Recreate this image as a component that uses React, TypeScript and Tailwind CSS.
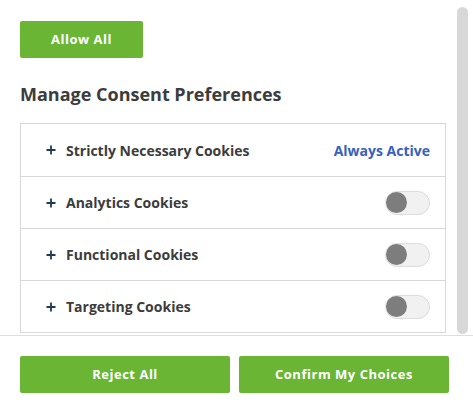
import { useState } from 'react'

const rows = [
  { label: 'Strictly Necessary Cookies', always: true },
  { label: 'Analytics Cookies' },
  { label: 'Functional Cookies' },
  { label: 'Targeting Cookies' },
]

function Toggle() {
  const [on, setOn] = useState(false)
  return (
    <button
      onClick={() => setOn(!on)}
      className="relative w-[45px] h-[24px] rounded-full bg-[#f1f1f1] border border-[#dcdcdc] flex items-center"
    >
      <span className={`w-[21px] h-[21px] rounded-full ${on ? 'bg-[#6ab533] ml-[21px]' : 'bg-[#7d7d7d] ml-[0px]'}`} />
    </button>
  )
}

function Plus() {
  return (
    <svg width="10" height="10" viewBox="0 0 10 10" className="shrink-0 mr-[10px]">
      <path d="M5 0.5v9M0.5 5h9" stroke="#1f3b57" strokeWidth="1.8" />
    </svg>
  )
}

export default function App() {
  return (
    <div className="w-[473px] h-[410px] bg-white flex flex-col overflow-hidden" style={{ fontFamily: '"Open Sans", sans-serif' }}>
      {/* scrollable body */}
      <div className="h-[335px] flex overflow-hidden">
        <div className="w-[446px] pl-[20px] pt-[21px] shrink-0">
          <button className="w-[123px] h-[37px] rounded-[2px] bg-[#6ab533] text-white text-[13px] font-bold tracking-[0.04em]">
            Allow All
          </button>
          <h2 className="mt-[24px] text-[18px] leading-[24px] font-bold text-[#3c3c3c]">Manage Consent Preferences</h2>
          <div className="mt-[17px] border border-[#d8d8d8]">
            {rows.map((r, i) => (
              <div
                key={r.label}
                className={`h-[52px] flex items-center pl-[25px] pr-[15px] ${i > 0 ? 'border-t border-[#d8d8d8]' : ''}`}
              >
                <Plus />
                <span className="text-[14px] font-bold text-[#3c3c3c]">{r.label}</span>
                <div className="ml-auto">
                  {r.always ? (
                    <span className="text-[14px] font-bold text-[#3860be]">Always Active</span>
                  ) : (
                    <Toggle />
                  )}
                </div>
              </div>
            ))}
          </div>
        </div>
        <div className="ml-[11px] mt-[7px] w-[11px] h-[327px] rounded-full bg-[#d8d8d8]" />
      </div>
      {/* footer */}
      <div className="border-t border-[#dedede] flex gap-[9px] px-[20px] pt-[20px]">
        <button className="w-[210px] h-[37px] rounded-[2px] bg-[#6ab533] text-white text-[13px] font-bold tracking-[0.04em]">
          Reject All
        </button>
        <button className="w-[210px] h-[37px] rounded-[2px] bg-[#6ab533] text-white text-[13px] font-bold tracking-[0.04em]">
          Confirm My Choices
        </button>
      </div>
    </div>
  )
}
